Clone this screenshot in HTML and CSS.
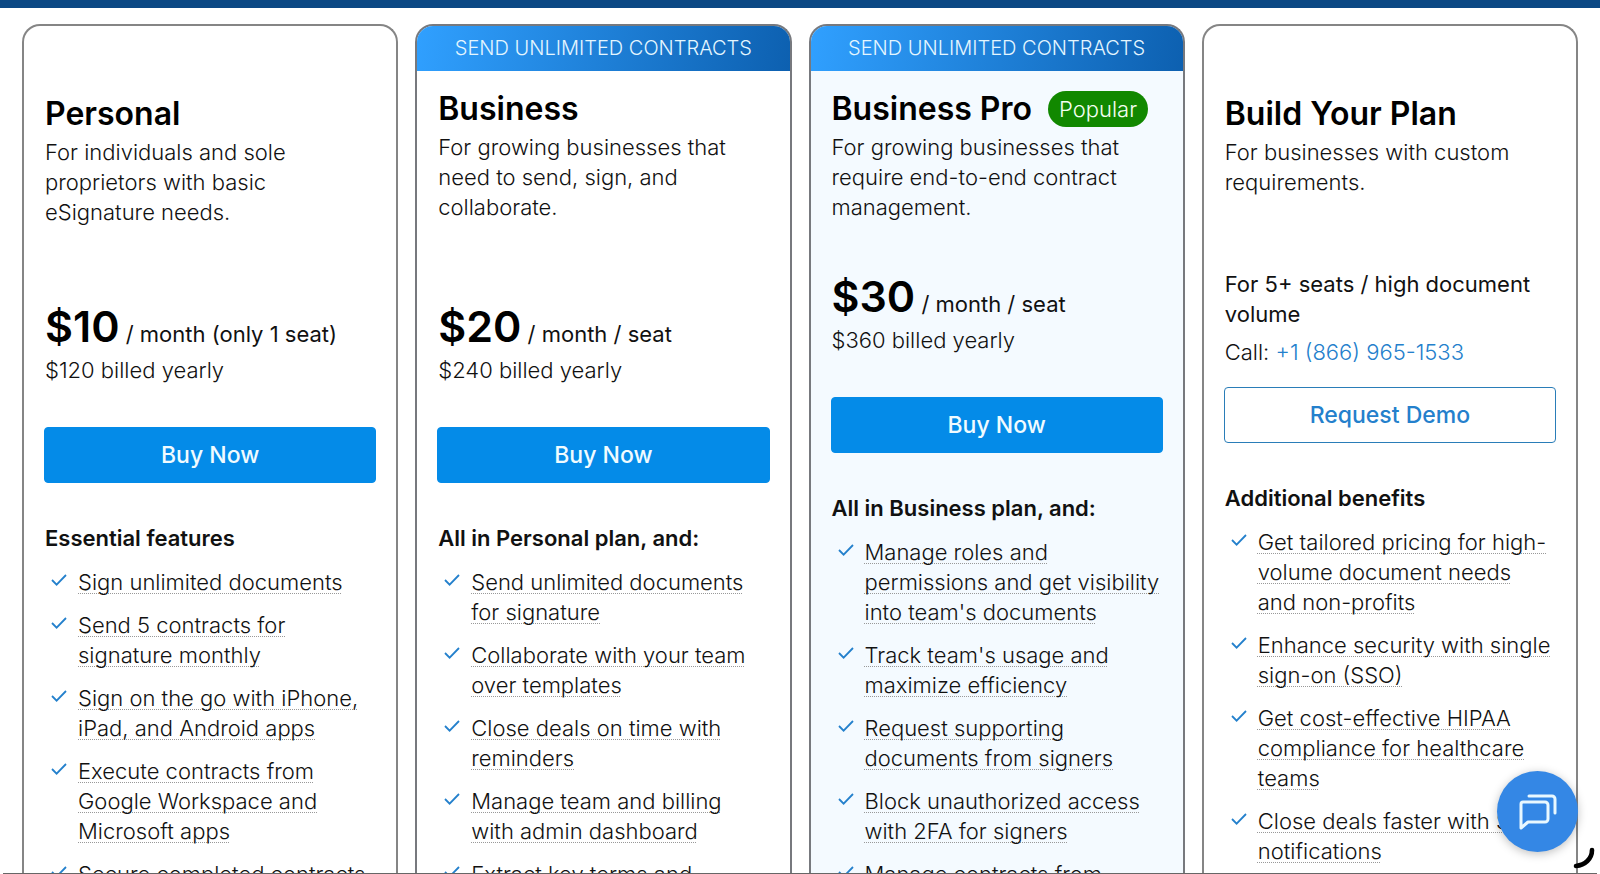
FILE: index.html
```html
<!DOCTYPE html>
<html lang="en">
  <head>
    <meta charset="UTF-8" />
    <meta name="viewport" content="width=device-width, initial-scale=1" />
    <title>Plans and Pricing</title>
    <link rel="stylesheet" href="styles.css">
  </head>
  <body>
    <svg class="sprite" aria-hidden="true">
      <symbol id="check" viewBox="0 0 16 12">
        <path d="M1 6l4.6 4.6L15 1" fill="none" stroke="currentColor" stroke-width="1.8" />
      </symbol>
    </svg>

    <header class="topbar"></header>

    <main class="plans">
      <!-- Personal -->
      <section class="plan">
        <div class="plan-head">
          <h2 class="plan-name">Personal</h2>
          <p class="plan-desc">For individuals and sole proprietors with basic eSignature needs.</p>
        </div>
        <p class="price"><strong>$10</strong> / month (only 1 seat)</p>
        <p class="billed">$120 billed yearly</p>
        <button class="btn" type="button">Buy Now</button>
        <h3 class="features-title">Essential features</h3>
        <ul class="features">
          <li><svg class="check"><use href="#check" /></svg><span>Sign unlimited documents</span></li>
          <li><svg class="check"><use href="#check" /></svg><span>Send 5 contracts for signature monthly</span></li>
          <li><svg class="check"><use href="#check" /></svg><span>Sign on the go with iPhone, iPad, and Android apps</span></li>
          <li><svg class="check"><use href="#check" /></svg><span>Execute contracts from Google Workspace and Microsoft apps</span></li>
          <li><svg class="check"><use href="#check" /></svg><span>Secure completed contracts</span></li>
        </ul>
      </section>

      <!-- Business -->
      <section class="plan plan-ribbon">
        <div class="ribbon">SEND UNLIMITED CONTRACTS</div>
        <div class="plan-head">
          <h2 class="plan-name">Business</h2>
          <p class="plan-desc">For growing businesses that need to send, sign, and collaborate.</p>
        </div>
        <p class="price"><strong>$20</strong> / month / seat</p>
        <p class="billed">$240 billed yearly</p>
        <button class="btn" type="button">Buy Now</button>
        <h3 class="features-title">All in Personal plan, and:</h3>
        <ul class="features">
          <li><svg class="check"><use href="#check" /></svg><span>Send unlimited documents for signature</span></li>
          <li><svg class="check"><use href="#check" /></svg><span>Collaborate with your team over templates</span></li>
          <li><svg class="check"><use href="#check" /></svg><span>Close deals on time with reminders</span></li>
          <li><svg class="check"><use href="#check" /></svg><span>Manage team and billing with admin dashboard</span></li>
          <li><svg class="check"><use href="#check" /></svg><span>Extract key terms and</span></li>
        </ul>
      </section>

      <!-- Business Pro -->
      <section class="plan plan-ribbon plan-popular">
        <div class="ribbon">SEND UNLIMITED CONTRACTS</div>
        <div class="plan-head">
          <h2 class="plan-name">Business Pro <span class="badge">Popular</span></h2>
          <p class="plan-desc">For growing businesses that require end-to-end contract management.</p>
        </div>
        <p class="price"><strong>$30</strong> / month / seat</p>
        <p class="billed">$360 billed yearly</p>
        <button class="btn" type="button">Buy Now</button>
        <h3 class="features-title">All in Business plan, and:</h3>
        <ul class="features">
          <li><svg class="check"><use href="#check" /></svg><span>Manage roles and permissions and get visibility into team's documents</span></li>
          <li><svg class="check"><use href="#check" /></svg><span>Track team's usage and maximize efficiency</span></li>
          <li><svg class="check"><use href="#check" /></svg><span>Request supporting documents from signers</span></li>
          <li><svg class="check"><use href="#check" /></svg><span>Block unauthorized access with 2FA for signers</span></li>
          <li><svg class="check"><use href="#check" /></svg><span>Manage contracts from</span></li>
        </ul>
      </section>

      <!-- Build Your Plan -->
      <section class="plan plan-custom">
        <div class="plan-head">
          <h2 class="plan-name">Build Your Plan</h2>
          <p class="plan-desc">For businesses with custom requirements.</p>
        </div>
        <p class="volume">For 5+ seats / high document volume</p>
        <p class="call">Call: <a href="tel:+18669651533">+1 (866) 965-1533</a></p>
        <button class="btn btn-outline" type="button">Request Demo</button>
        <h3 class="features-title">Additional benefits</h3>
        <ul class="features">
          <li><svg class="check"><use href="#check" /></svg><span>Get tailored pricing for high-volume document needs and non-profits</span></li>
          <li><svg class="check"><use href="#check" /></svg><span>Enhance security with single sign-on (SSO)</span></li>
          <li><svg class="check"><use href="#check" /></svg><span>Get cost-effective HIPAA compliance for healthcare teams</span></li>
          <li><svg class="check"><use href="#check" /></svg><span>Close deals faster with SMS notifications</span></li>
        </ul>
      </section>
    </main>

    <button class="chat" type="button" aria-label="Open chat">
      <svg width="40" height="40" viewBox="0 0 40 40" fill="none" stroke="#e8f8ff" stroke-width="3" stroke-linecap="round" stroke-linejoin="round">
        <path d="M5 10h22a3 3 0 0 1 3 3v14a3 3 0 0 1-3 3H10l-7 6V12a2 2 0 0 1 2-2z" />
        <path d="M11 4h23a3 3 0 0 1 3 3v14" />
      </svg>
    </button>
    <svg class="corner" width="24" height="24" viewBox="0 0 24 24" aria-hidden="true">
      <path d="M20 4C20 13 13 19 4 20" fill="none" stroke="#000" stroke-width="4.6" stroke-linecap="round" />
    </svg>
    <div class="bottom-line"></div>
  </body>
</html>
```
FILE: styles.css
```css
* {
  margin: 0;
  padding: 0;
  box-sizing: border-box;
}

body {
  display: flex;
  flex-direction: column;
  height: 100vh;
  overflow: hidden;
  font-family: Inter, "Liberation Sans", sans-serif;
  font-size: 22px;
  font-weight: 300;
  line-height: 30px;
  color: #111;
  background: #fff;
}

.sprite {
  display: none;
}

.topbar {
  flex: none;
  height: 8px;
  background: #0b4884;
}

.plans {
  display: grid;
  flex: 1;
  grid-template-columns: repeat(4, minmax(0, 1fr));
  gap: 17px;
  min-height: 0;
  padding: 16px 22px 0;
  overflow: hidden;
}

.plan {
  display: flex;
  flex-direction: column;
  padding: 0 20px;
  border: 2px solid #858585;
  border-bottom: 0;
  border-radius: 18px 18px 0 0;
  overflow: hidden;
}

.plan-ribbon {
  border-color: #77797e;
}

.plan-popular {
  background: #f4faff;
}

.ribbon {
  flex: none;
  margin: 0 -20px;
  line-height: 45px;
  font-size: 20px;
  text-align: center;
  color: #e4f6ff;
  background: linear-gradient(100deg, #30a0ff, #0d60b0);
}

.plan-head {
  flex: none;
  min-height: 275px;
  padding: 68px 1px 0;
}

.plan-ribbon .plan-head {
  min-height: 230px;
  padding-top: 18px;
}

.plan-popular .plan-head {
  min-height: 200px;
}

.plan-custom .plan-head {
  min-height: 243px;
}

.plan-name {
  display: flex;
  align-items: center;
  gap: 16px;
  margin-bottom: 3px;
  font-size: 32px;
  font-weight: 600;
  line-height: 40px;
  color: #000;
}

.badge {
  padding: 0 11px;
  border-radius: 18px;
  font-size: 22px;
  font-weight: 300;
  line-height: 36px;
  color: #f4fff2;
  background: #118800;
}

.price {
  padding: 0 1px;
  font-weight: 400;
}

.price strong {
  font-size: 43px;
  font-weight: 600;
  line-height: 50px;
  color: #000;
}

.billed {
  padding: 0 1px;
  margin: 4px 0 42px;
}

.volume {
  padding: 0 1px;
  font-weight: 400;
}

.call {
  padding: 0 1px;
  margin: 8px 0 20px;
}

.call a {
  color: #2480cc;
  text-decoration: none;
}

.btn {
  flex: none;
  height: 56px;
  border: 1px solid #048be8;
  border-radius: 4px;
  font-family: inherit;
  font-size: 23px;
  font-weight: 500;
  color: #f0fbff;
  background: #048be8;
  cursor: pointer;
}

.btn-outline {
  color: #2480cc;
  border-color: #2a7db8;
  background: #fff;
}

.features-title {
  margin: 40px 1px 14px;
  font-size: 22px;
  font-weight: 600;
}

.features {
  display: flex;
  flex-direction: column;
  gap: 13px;
  padding-right: 3px;
  list-style: none;
}

.features li {
  position: relative;
  padding-left: 34px;
  text-decoration: underline dotted 1px #999;
  text-decoration-skip-ink: none;
  text-underline-offset: 3px;
}

.check {
  position: absolute;
  left: 7px;
  top: 7px;
  width: 16px;
  height: 12px;
  color: #2480cc;
}

.chat {
  position: fixed;
  right: 22px;
  bottom: 22px;
  display: flex;
  align-items: center;
  justify-content: center;
  width: 81px;
  height: 81px;
  border: 0;
  border-radius: 50%;
  background: #3487e5;
  box-shadow: 0 2px 10px rgba(0, 0, 0, 0.25);
  cursor: pointer;
}

.corner {
  position: fixed;
  right: 4px;
  bottom: 4px;
}

.bottom-line {
  position: fixed;
  left: 3px;
  right: 3px;
  bottom: 0;
  height: 1px;
  background: #666;
}
```
